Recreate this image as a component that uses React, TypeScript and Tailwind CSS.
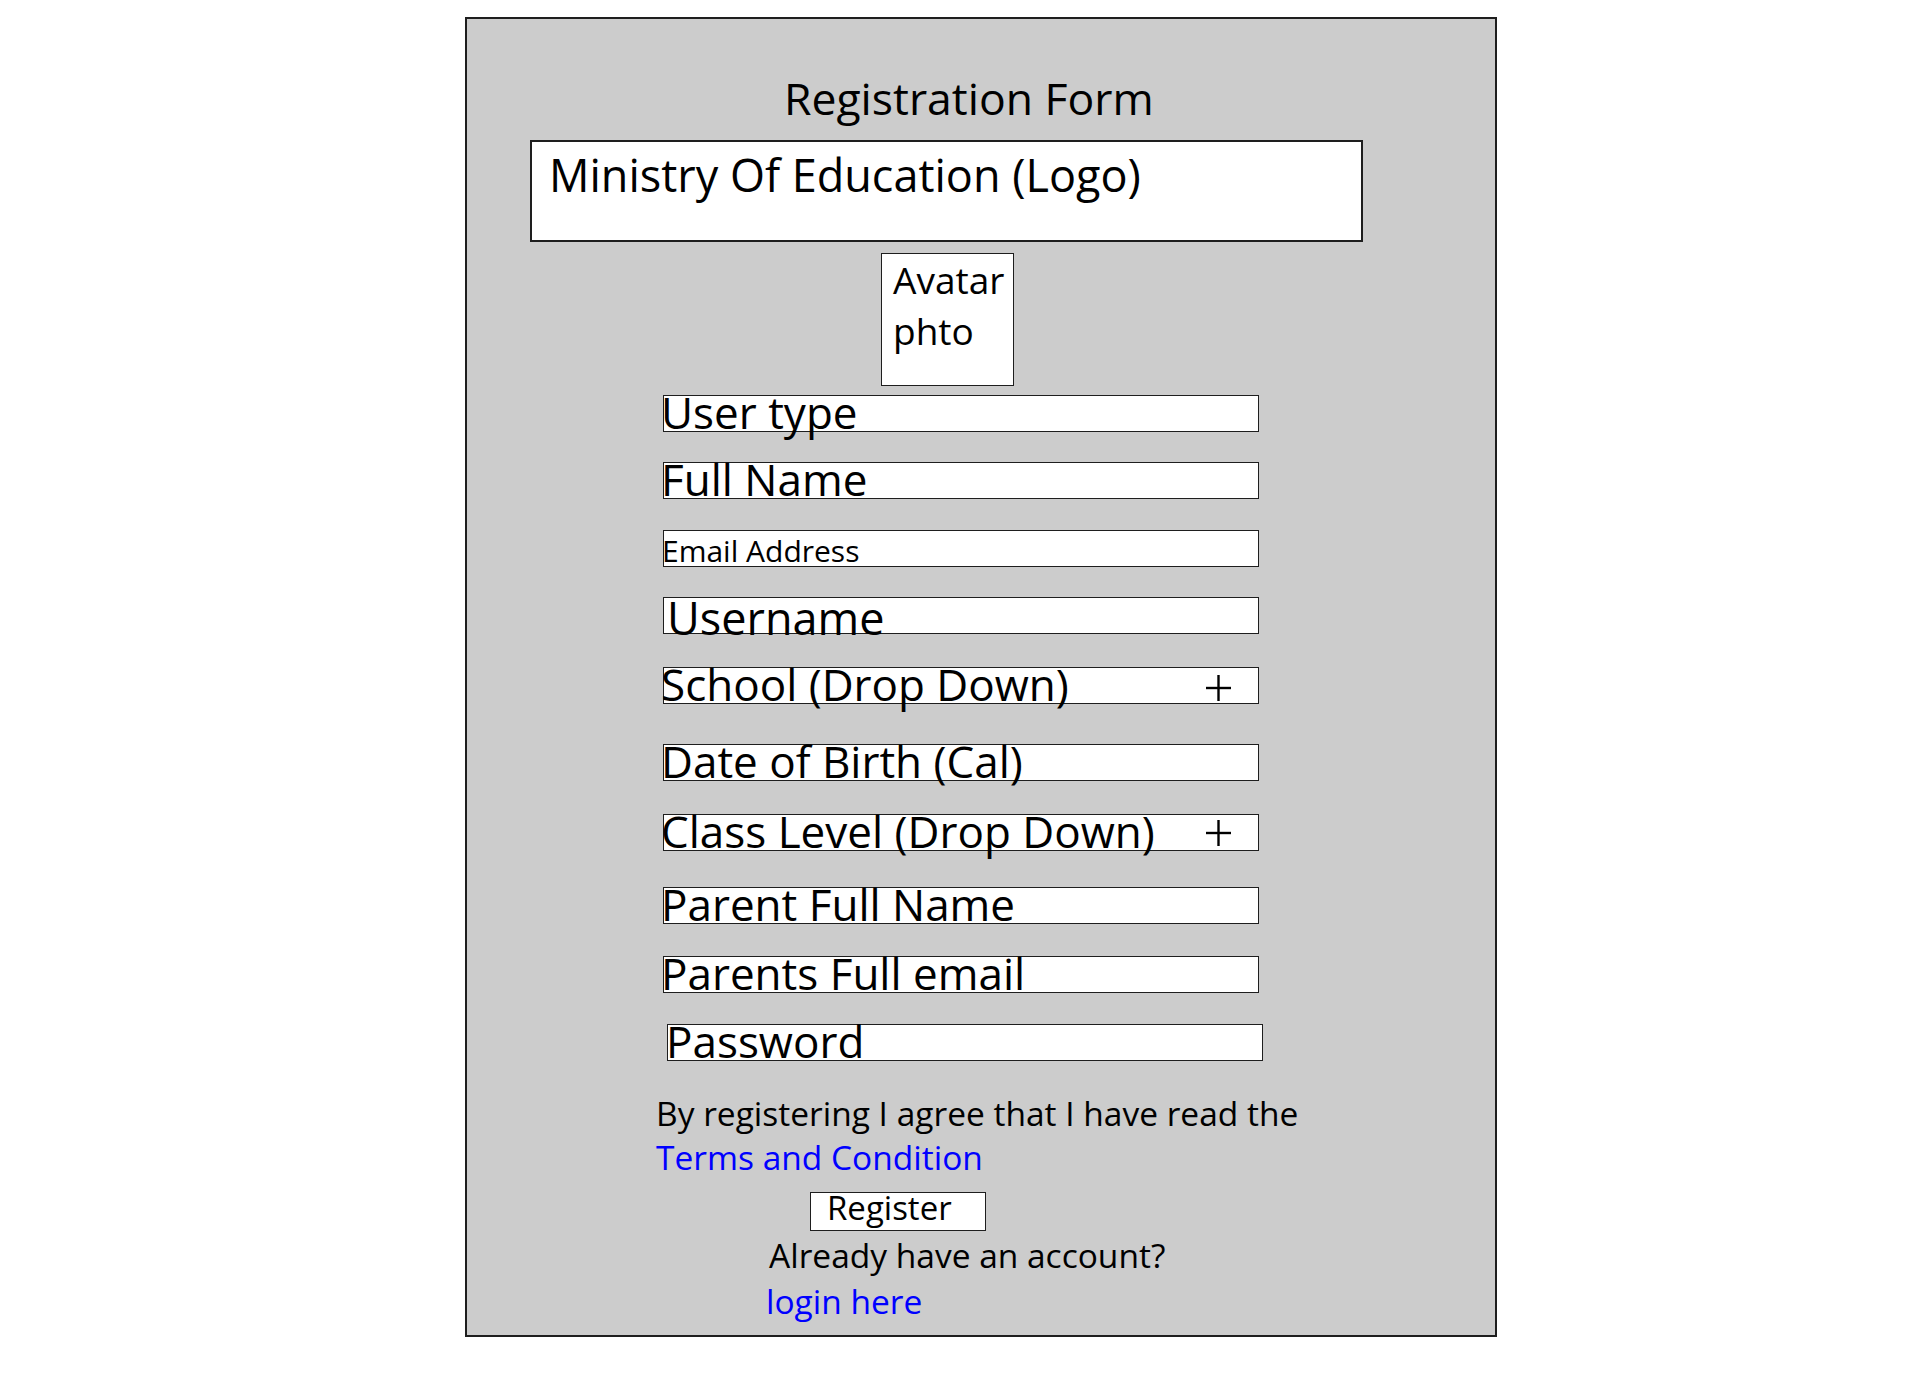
import React from "react";

const font = { fontFamily: '"Open Sans", "Noto Sans", sans-serif' };

function Plus({ className }: { className?: string }) {
  return (
    <svg width="25" height="26" viewBox="0 0 25 26" className={className}>
      <line x1="0" y1="13" x2="25" y2="13" stroke="#000" strokeWidth="2.4" />
      <line x1="12.5" y1="0" x2="12.5" y2="26" stroke="#000" strokeWidth="2.4" />
    </svg>
  );
}

export default function App() {
  return (
    <div className="w-full min-h-[1380px] bg-white flex flex-col items-start text-black" style={font}>
      <div className="ml-[465px] mt-[17px] w-[1032px] h-[1320px] border-2 border-[#1e1e1e] bg-[#cccccc] flex flex-col items-start">
        <h1 className="ml-[317px] mt-[57px] text-[44.5px] leading-[44px] font-normal whitespace-nowrap">
          Registration Form
        </h1>

        <div className="ml-[63px] mt-[20px] w-[833px] h-[102px] border-2 border-[#1e1e1e] bg-white pl-[17px] pt-[10px]">
          <div className="text-[45px] leading-[45px] whitespace-nowrap">Ministry Of Education (Logo)</div>
        </div>

        <div className="ml-[414px] mt-[11px] w-[133px] h-[133px] border border-[#1e1e1e] bg-white pl-[11px]">
          <div className="text-[37px] leading-[51px]">Avatar</div>
          <div className="text-[37px] leading-[51px]">phto</div>
        </div>

        <div className="ml-[196px] mt-[9px] w-[596px] h-[37px] border border-[#1e1e1e] bg-white">
          <div className="ml-[-3px] text-[44px] leading-[33px] whitespace-nowrap">User type</div>
        </div>

        <div className="ml-[196px] mt-[30px] w-[596px] h-[37px] border border-[#1e1e1e] bg-white">
          <div className="ml-[-3px] text-[44px] leading-[33px] whitespace-nowrap">Full Name</div>
        </div>

        <div className="ml-[196px] mt-[31px] w-[596px] h-[37px] border border-[#1e1e1e] bg-white">
          <div className="ml-[-2px] text-[30px] leading-[39px] whitespace-nowrap">Email Address</div>
        </div>

        <div className="ml-[196px] mt-[30px] w-[596px] h-[37px] border border-[#1e1e1e] bg-white">
          <div className="ml-[3px] pt-[3px] text-[45px] leading-[33px] whitespace-nowrap">Username</div>
        </div>

        <div className="ml-[196px] mt-[33px] w-[596px] h-[37px] border border-[#1e1e1e] bg-white flex items-start justify-between pr-[27px]">
          <div className="ml-[-3px] text-[44px] leading-[33px] whitespace-nowrap">School (Drop Down)</div>
          <Plus className="mt-[7px] shrink-0" />
        </div>

        <div className="ml-[196px] mt-[40px] w-[596px] h-[37px] border border-[#1e1e1e] bg-white">
          <div className="ml-[-3px] text-[44px] leading-[33px] whitespace-nowrap">Date of Birth (Cal)</div>
        </div>

        <div className="ml-[196px] mt-[33px] w-[596px] h-[37px] border border-[#1e1e1e] bg-white flex items-start justify-between pr-[27px]">
          <div className="ml-[-3px] text-[44px] leading-[33px] whitespace-nowrap">Class Level (Drop Down)</div>
          <Plus className="mt-[5px] shrink-0" />
        </div>

        <div className="ml-[196px] mt-[36px] w-[596px] h-[37px] border border-[#1e1e1e] bg-white">
          <div className="ml-[-3px] text-[44px] leading-[33px] whitespace-nowrap">Parent Full Name</div>
        </div>

        <div className="ml-[196px] mt-[32px] w-[596px] h-[37px] border border-[#1e1e1e] bg-white">
          <div className="ml-[-3px] text-[44px] leading-[33px] whitespace-nowrap">Parents Full email</div>
        </div>

        <div className="ml-[200px] mt-[31px] w-[596px] h-[37px] border border-[#1e1e1e] bg-white">
          <div className="ml-[-2px] text-[44px] leading-[33px] whitespace-nowrap">Password</div>
        </div>

        <div className="ml-[189px] mt-[30px] text-[33.5px] leading-[44px]">
          <div className="whitespace-nowrap">By registering I agree that I have read the</div>
          <div className="whitespace-nowrap text-[#0000ff]">Terms and Condition</div>
        </div>

        <div className="ml-[343px] mt-[13px] w-[176px] h-[39px] border border-[#1e1e1e] bg-white pl-[16px]">
          <div className="text-[33px] leading-[29px]">Register</div>
        </div>

        <div className="ml-[302px] mt-[1px] text-[33.5px] leading-[46px]">
          <div className="whitespace-nowrap">Already have an account?</div>
          <div className="whitespace-nowrap text-[#0000ff] ml-[-3px]">login here</div>
        </div>
      </div>
    </div>
  );
}
